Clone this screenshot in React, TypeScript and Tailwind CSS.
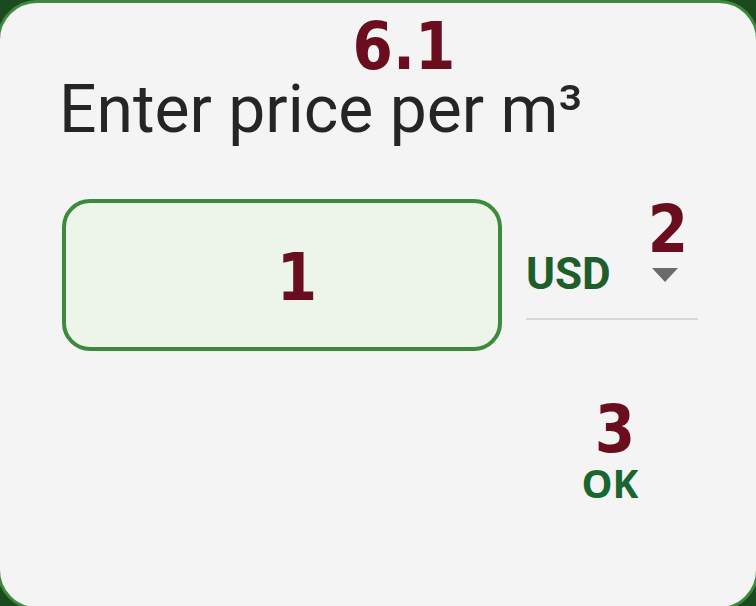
import React from "react";

const labelFont = { fontFamily: "'DejaVu Sans', sans-serif" };

function Label({ text, className }: { text: string; className: string }) {
  return (
    <div
      className={
        "absolute text-center text-[66px] leading-[66px] font-bold text-[#6a0d1e] scale-x-[0.88] " +
        className
      }
      style={labelFont}
    >
      {text}
    </div>
  );
}

export default function App() {
  return (
    <div className="relative w-[756px] h-[606px] overflow-hidden bg-[#1c4a1f]">
      <div className="ml-[-3px] w-[762px] h-[610px] rounded-[40px] border-[3px] border-[#3d8a3f] bg-[#f4f4f4] pl-[59px] pt-[74px]">
        <div
          className="text-[66px] leading-[66px] text-[#252525]"
          style={{ fontFamily: "Roboto, sans-serif" }}
        >
          Enter price per m³
        </div>
        <div className="mt-[56px] flex items-start">
          <div className="ml-[3px] w-[440px] h-[152px] rounded-[28px] border-4 border-[#3d8a3f] bg-[#edf5ea]" />
          <div className="ml-[24px] mt-[51px] w-[172px] h-[70px] border-b-2 border-[#d8d8d8] flex items-start justify-between">
            <div
              className="pt-[2px] text-[44px] leading-[44px] font-bold text-[#1e5e2a]"
              style={{ fontFamily: "Roboto, sans-serif" }}
            >
              USD
            </div>
            <svg width="26" height="14" viewBox="0 0 26 14" className="mt-[18px] mr-[20px]">
              <path d="M0 0 L26 0 L13 14 Z" fill="#6b6b6b" />
            </svg>
          </div>
        </div>
        <div className="mt-[112px] flex justify-end pr-[96px]">
          <div
            className="w-[100px] text-center text-[39px] leading-[39px] font-bold text-[#1a6630]"
            style={{ fontFamily: "'Open Sans', sans-serif" }}
          >
            OK
          </div>
        </div>
      </div>

      <Label text="6.1" className="left-[344px] top-[14px] w-[120px]" />
      <Label text="1" className="left-[267px] top-[245px] w-[60px]" />
      <Label text="2" className="left-[638px] top-[197px] w-[60px]" />
      <Label text="3" className="left-[585px] top-[397px] w-[60px]" />
    </div>
  );
}
